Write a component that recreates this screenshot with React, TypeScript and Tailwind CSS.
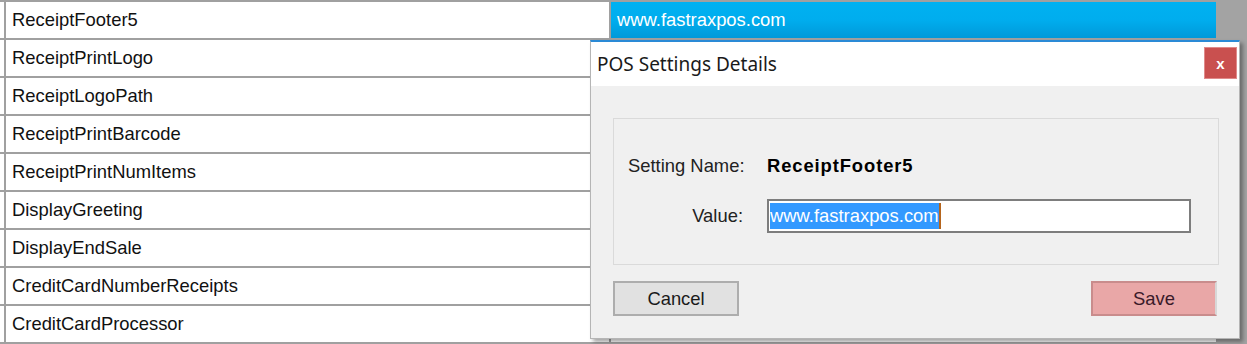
import React from 'react';

const rows = [
  { name: 'ReceiptFooter5', value: 'www.fastraxpos.com', selected: true },
  { name: 'ReceiptPrintLogo' },
  { name: 'ReceiptLogoPath' },
  { name: 'ReceiptPrintBarcode' },
  { name: 'ReceiptPrintNumItems' },
  { name: 'DisplayGreeting' },
  { name: 'DisplayEndSale' },
  { name: 'CreditCardNumberReceipts' },
  { name: 'CreditCardProcessor' },
];

const App = () => {
  return (
    <div className="relative w-[1247px] h-[344px] overflow-hidden bg-[#a3a3a3] font-['Liberation_Sans',Arial,sans-serif] text-[18.4px] text-[#111]">
      {/* Settings grid */}
      <div className="w-[1216px] bg-white border-t-2 border-[#a0a0a0]">
        {rows.map((row, i) => (
          <div key={i} className="flex h-[38px] border-b-2 border-[#a0a0a0]">
            <div className="w-[6px] bg-white border-r-2 border-[#a0a0a0]" />
            <div className="flex w-[605px] items-center pl-[6px] border-r-2 border-[#a0a0a0]">
              {row.name}
            </div>
            <div
              className={`flex flex-1 items-center pl-[6px] ${
                row.selected ? 'bg-gradient-to-b from-[#00b1f1] via-[#00adee] to-[#0099d9] text-white' : ''
              }`}
            >
              {row.value}
            </div>
          </div>
        ))}
      </div>

      {/* POS Settings Details dialog */}
      <div className="absolute left-[590px] top-[40px] w-[650px] h-[299px] flex flex-col bg-[#f0f0f0] border-x border-b border-[#b5b5b5] border-t-2 border-t-[#2a8ad6] shadow-[3px_3px_4px_rgba(0,0,0,0.35)]">
        <div className="flex h-[44px] items-start justify-between bg-white pl-[6px] pr-[2px]">
          <span className="mt-[8px] font-['Noto_Sans',sans-serif] text-[19px] text-[#1a1a1a]">POS Settings Details</span>
          <button className="mt-[5px] flex h-[32px] w-[33px] items-center justify-center bg-[#c9504f] border border-[#e08a8a] text-white font-bold text-[15px] leading-none">
            x
          </button>
        </div>

        <div className="flex flex-col px-[22px] pt-[32px]">
          <div className="h-[147px] w-[606px] border border-[#dadada] pl-[14px] pt-[30px]">
            <div className="grid grid-cols-[115px_424px] gap-x-[24px] gap-y-[16px]">
              <div className="flex h-[34px] items-center text-[#222] whitespace-nowrap">Setting Name:</div>
              <div className="flex h-[34px] items-center font-bold tracking-[0.9px] text-black">ReceiptFooter5</div>
              <div className="flex h-[34px] items-center justify-end text-[#222]">Value:</div>
              <div className="flex h-[34px] items-center bg-white border-2 border-[#7d7d7d] pl-[1px]">
                <span className="bg-[#3399ff] text-white leading-[26px] border-r-2 border-[#b5651d]">www.fastraxpos.com</span>
              </div>
            </div>
          </div>

          <div className="mt-[16px] flex justify-between w-[604px]">
            <button className="h-[35px] w-[126px] bg-[#e1e1e1] border-2 border-[#adadad] text-[#1a1a1a]">Cancel</button>
            <button className="h-[35px] w-[126px] bg-[#e9a7a7] border-2 border-[#c98c8c] border-r-[#d8d8d8] text-[#3a1a2a]">Save</button>
          </div>
        </div>
      </div>
    </div>
  );
};

export default App;
